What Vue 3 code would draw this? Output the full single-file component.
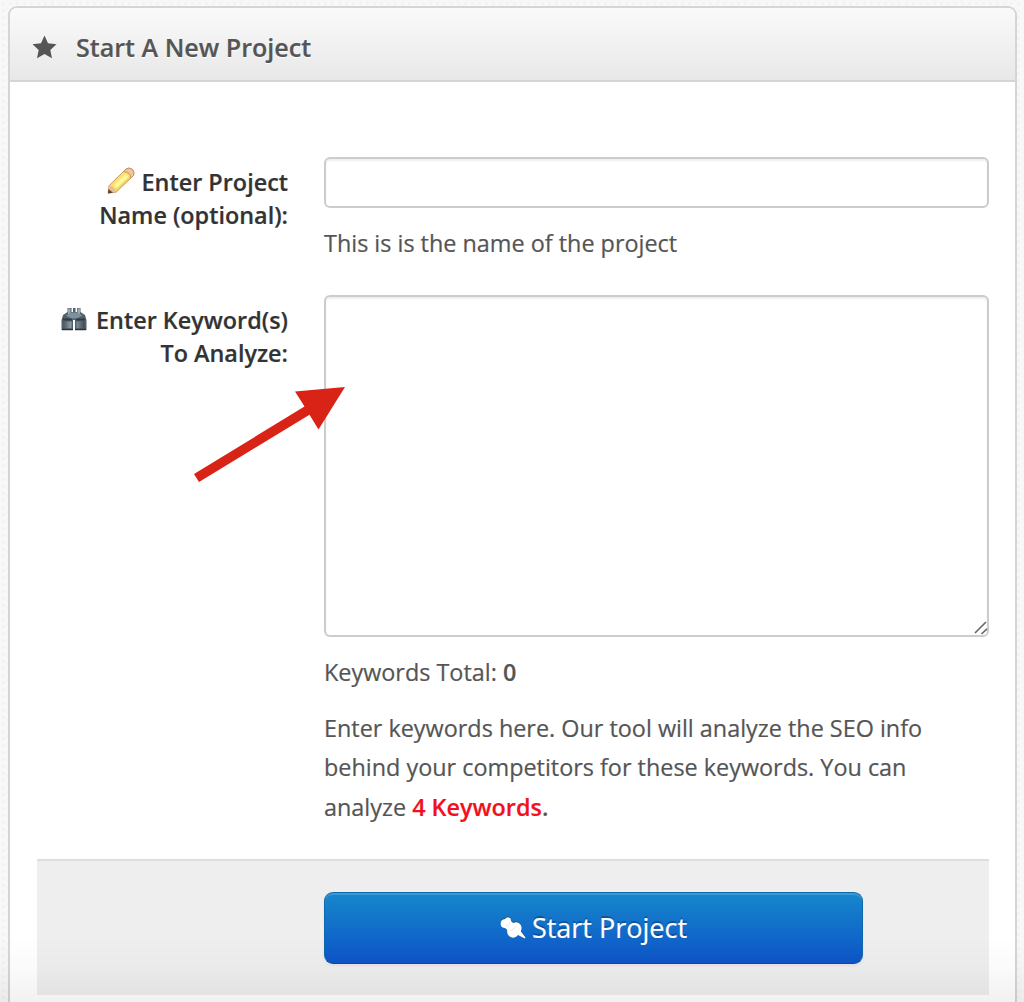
<script setup>
import { ref } from 'vue'

const projectName = ref('')
const keywords = ref('')
</script>

<template>
  <main class="page">
    <section class="widget">
      <header class="widget-header">
        <svg class="star" viewBox="0 0 24 24">
          <path d="M12 0.5 L15.5 8.2 L24 9.2 L17.8 14.9 L19.5 23.2 L12 19 L4.5 23.2 L6.2 14.9 L0 9.2 L8.5 8.2 Z" />
        </svg>
        <h3>Start A New Project</h3>
      </header>

      <form class="widget-body" @submit.prevent>
        <div class="row row-name">
          <label for="name">
            <svg class="pencil" viewBox="0 0 28 28">
              <defs>
                <linearGradient id="pencil-body" x1="0" y1="0" x2="1" y2="1">
                  <stop offset="0" stop-color="#f0b860" />
                  <stop offset=".5" stop-color="#fbe878" />
                  <stop offset="1" stop-color="#d2934a" />
                </linearGradient>
              </defs>
              <path d="M1 26 L2.2 18.5 L19 2 Q22 0 25.3 2.3 Q28 5 26.5 8.500 L9 25.2 Z" fill="url(#pencil-body)" stroke="#cf955c" stroke-width="1" />
              <path d="M16.500 4.500 L19 2 Q22 0 25.3 2.3 Q28 5 26.5 8.500 L24 11 Q23.8 5.5 16.500 4.500 Z" fill="#efc6a2" stroke="#cf8f62" stroke-width="1" />
              <path d="M1 26 L2.2 18.5 Q7.5 19 9 25.2 Z" fill="#e9bd8c" />
              <path d="M1 26.500 L1.500 22 L6 25.800 Z" fill="#5d4636" />
              <path d="M8.500 19.500 L20 8.500" stroke="#fff799" stroke-width="4" />
            </svg>
            Enter Project<br>Name (optional):
          </label>
          <div class="field">
            <input id="name" v-model="projectName" type="text">
            <p class="hint">This is is the name of the project</p>
          </div>
        </div>

        <div class="row row-keywords">
          <label for="keywords">
            <svg class="binoculars" viewBox="0 0 26 24">
              <defs>
                <linearGradient id="barrel" x1="0" y1="0" x2="1" y2="0">
                  <stop offset="0" stop-color="#4b5963" />
                  <stop offset=".45" stop-color="#a3afb8" />
                  <stop offset="1" stop-color="#3e4a53" />
                </linearGradient>
              </defs>
              <path d="M6.500 1 H10.500 V5 H12 V1 H14.500 V5 H16 V1 H19.500 V5 L24 8 L25.500 13 V23 H14 V13 H12 V23 H.500 V13 L2 8 L6.500 5 Z" fill="#52606a" />
              <path d="M7 1.500 H9.500 V8 H7 Z M16.500 1.500 H19 V8 H16.500 Z" fill="#9caab4" />
              <path d="M5 8.500 L10 5.500 H16.500 L21.500 8.500 L16 11.500 H10 Z" fill="#7d909d" />
              <path d="M2 12.500 H11 M15 12.500 H24" stroke="#303a42" stroke-width="1.800" />
              <path d="M2.500 14.500 H10.500 V21.500 H2.500 Z M15.500 14.500 H23.500 V21.500 H15.500 Z" fill="url(#barrel)" />
              <path d="M1 22.500 H12 M14 22.500 H25" stroke="#2c343a" stroke-width="1.400" />
            </svg>
            Enter Keyword(s)<br>To Analyze:
          </label>
          <div class="field">
            <div class="area-wrap">
              <textarea id="keywords" v-model="keywords"></textarea>
              <svg class="grip" viewBox="0 0 14 14">
                <path d="M1 12 L12 1 M7.5 13 L13 7.8" />
              </svg>
            </div>
            <p class="total">Keywords Total: <b>0</b></p>
            <p class="info">
              Enter keywords here. Our tool will analyze the SEO info<br>
              behind your competitors for these keywords. You can<br>
              analyze <b class="limit">4 Keywords</b><b>.</b>
            </p>
          </div>
        </div>

        <div class="actions">
          <button type="submit">
            <svg class="pin" viewBox="0 0 26 23">
              <path d="M.800 8 Q0 2.500 5 2 Q6 .300 8.500 .300 Q11.500 1 11 4 L13 6 Q17.500 4 20.500 7.500 Q22.500 10 20.800 14.200 L25.500 20.500 L24.800 21.500 L18 18 Q15 22 10.500 20 Q6.500 17.500 7.200 12.800 L5 11 Q1.500 11 .800 8 Z" />
              <path d="M6 9.500 Q9.500 8 10.500 4.500 M10.500 14.200 Q14 12.500 15.500 9.500" class="crease" />
            </svg>
            <span>Start Project</span>
          </button>
        </div>
      </form>
    </section>

    <svg class="arrow" viewBox="0 0 152 98">
      <path d="M151 2 L124.500 44.500 L115.500 29.800 L5 97 L0 89 L110.500 21.500 L101 6.500 Z" />
    </svg>
  </main>
</template>

<style>
body {
  overflow: hidden;
}
</style>

<style scoped>
.page {
  position: relative;
  box-sizing: border-box;
  height: 1002px;
  padding: 6px 7px 0 8px;
  overflow: hidden;
  background:
    radial-gradient(circle, #f2f2f2 1px, transparent 1.8px) 0 0 / 7px 7px,
    radial-gradient(circle, #f4f4f4 1px, transparent 1.8px) 3px 4px / 9px 8px,
    #f8f8f8;
  font-family: "Open Sans", "Noto Sans", sans-serif;
  font-size: 23.4px;
  color: #555;
  -webkit-text-stroke: .2px currentColor;
}

.page::after {
  content: "";
  position: absolute;
  inset: auto 0 0;
  height: 66px;
  background: linear-gradient(rgba(0, 0, 0, 0), rgba(0, 0, 0, .015) 45%, rgba(0, 0, 0, .055));
  pointer-events: none;
}

.widget {
  box-sizing: border-box;
  height: 1010px;
  border: 2px solid #d5d5d5;
  border-radius: 9px;
  background: #fff;
}

.widget-header {
  display: flex;
  align-items: center;
  box-sizing: border-box;
  height: 74px;
  padding-left: 22px;
  border-bottom: 2px solid #d5d5d5;
  border-radius: 7px 7px 0 0;
  background: linear-gradient(#fafafa, #e8e8e8);
}

.star {
  width: 25px;
  height: 24px;
  margin-top: 6px;
  fill: #555;
}

h3 {
  margin: 6px 0 0 19px;
  font-size: 25.1px;
  font-weight: 600;
  line-height: 32px;
  text-shadow: 0 1px 0 #fff;
  white-space: nowrap;
}

.widget-body {
  padding: 75px 26px 0 27px;
}

.row {
  display: flex;
  justify-content: space-between;
}

.row-name {
  height: 138px;
}

.row-keywords {
  height: 564px;
}

label {
  width: 251px;
  padding-top: 9px;
  color: #333;
  font-weight: 600;
  line-height: 32.5px;
  text-align: right;
  white-space: nowrap;
}

.pencil {
  width: 28px;
  height: 28px;
  vertical-align: -4px;
}

.binoculars {
  width: 26px;
  height: 24px;
  margin-right: 3px;
  vertical-align: -2px;
}

.field {
  width: 665px;
}

input,
textarea {
  display: block;
  box-sizing: border-box;
  width: 100%;
  margin: 0;
  border: 2px solid #ccc;
  border-radius: 6px;
  background: #fff;
  box-shadow: inset 0 2px 2px rgba(0, 0, 0, .065);
  font: inherit;
  outline: none;
  resize: none;
}

input {
  height: 51px;
}

textarea {
  height: 342px;
}

.area-wrap {
  position: relative;
}

.grip {
  position: absolute;
  right: 1px;
  bottom: 2px;
  width: 14px;
  height: 14px;
  fill: none;
  stroke: #666;
  stroke-width: 1.6;
}

p {
  margin: 0;
  line-height: 39.5px;
  white-space: nowrap;
}

.hint,
.total,
.info {
  padding-top: 16px;
}

b {
  font-weight: 600;
}

.limit {
  color: #f2101f;
}

.actions {
  display: flex;
  box-sizing: border-box;
  height: 136px;
  padding: 31px 0 0 287px;
  border-top: 2px solid #ddd;
  background: #eee;
}

button {
  display: flex;
  align-items: center;
  justify-content: center;
  gap: 6px;
  width: 539px;
  height: 72px;
  padding: 0;
  border: 1px solid #0e68ad;
  border-bottom-color: #064b9a;
  border-radius: 9px;
  background: linear-gradient(#1687cb, #0d54c8);
  box-shadow: inset 0 2px 0 rgba(255, 255, 255, .16), 0 2px 3px rgba(0, 0, 0, .05);
  color: #fff;
  font: 27px/36px "Open Sans", "Noto Sans", sans-serif;
  text-shadow: 0 -2px 0 rgba(0, 0, 0, .25);
  -webkit-text-stroke: .2px currentColor;
}

.pin {
  width: 26px;
  height: 23px;
  fill: #fff;
  filter: drop-shadow(0 -1px 0 rgba(0, 0, 0, .25));
}

.crease {
  fill: none;
  stroke: #d7e4f4;
  stroke-width: .8;
}

.arrow {
  position: absolute;
  left: 194px;
  top: 385px;
  width: 152px;
  height: 98px;
  fill: #d92316;
}
</style>
